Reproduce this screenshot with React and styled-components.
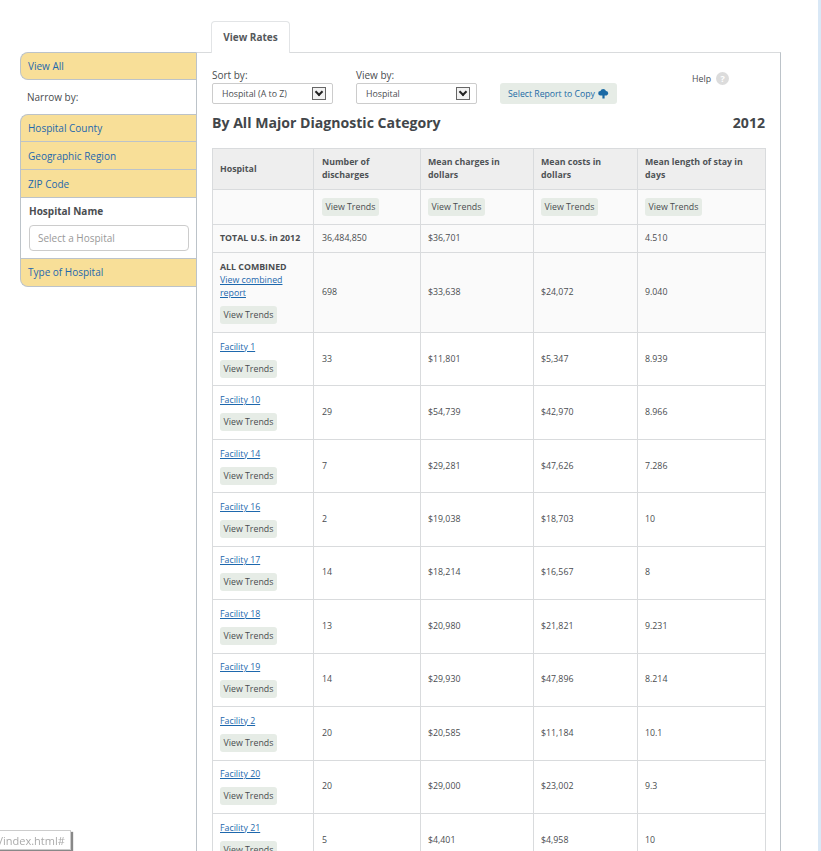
import React from 'react'
import styled, { createGlobalStyle } from 'styled-components'

const GlobalStyle = createGlobalStyle`
  html, body {
    margin: 0;
    height: 851px;
    overflow: hidden;
    background: #fff;
  }
  body {
    font-family: "Open Sans", "Liberation Sans", sans-serif;
    color: #4a4d50;
  }
`

const facilities = [
  ['Facility 1', '33', '$11,801', '$5,347', '8.939'],
  ['Facility 10', '29', '$54,739', '$42,970', '8.966'],
  ['Facility 14', '7', '$29,281', '$47,626', '7.286'],
  ['Facility 16', '2', '$19,038', '$18,703', '10'],
  ['Facility 17', '14', '$18,214', '$16,567', '8'],
  ['Facility 18', '13', '$20,980', '$21,821', '9.231'],
  ['Facility 19', '14', '$29,930', '$47,896', '8.214'],
  ['Facility 2', '20', '$20,585', '$11,184', '10.1'],
  ['Facility 20', '20', '$29,000', '$23,002', '9.3'],
  ['Facility 21', '5', '$4,401', '$4,958', '10'],
]

const headers = ['Number of discharges', 'Mean charges in dollars', 'Mean costs in dollars', 'Mean length of stay in days']

const CloudIcon = () => (
  <svg width="11" height="10" viewBox="0 0 11 10">
    <path fill="#1b6aa5" d="M2.4 6.4A2.2 2.2 0 0 1 2.4 2 3 3 0 0 1 8 1.9 2.3 2.3 0 0 1 8.6 6.4H6.6V9.6H4.4V6.4z" />
  </svg>
)

const App = () => {
  return (
    <Page>
      <GlobalStyle />
      <Sidebar>
        <AccordionItem $single>View All</AccordionItem>
        <NarrowLabel>Narrow by:</NarrowLabel>
        <AccordionItem $top>Hospital County</AccordionItem>
        <AccordionItem>Geographic Region</AccordionItem>
        <AccordionItem>ZIP Code</AccordionItem>
        <HospitalFilter>
          <FilterTitle>Hospital Name</FilterTitle>
          <FilterInput placeholder="Select a Hospital" />
        </HospitalFilter>
        <AccordionItem $bottom>Type of Hospital</AccordionItem>
      </Sidebar>
      <Main>
        <Tab>View Rates</Tab>
        <Panel>
          <Controls>
            <Control $width="121px">
              <ControlLabel>Sort by:</ControlLabel>
              <SelectBox>
                Hospital (A to Z)
                <SelectArrow />
              </SelectBox>
            </Control>
            <Control $width="121px">
              <ControlLabel>View by:</ControlLabel>
              <SelectBox>
                Hospital
                <SelectArrow />
              </SelectBox>
            </Control>
            <CopyButton>
              Select Report to Copy <CloudIcon />
            </CopyButton>
            <Help>
              Help <HelpDot>?</HelpDot>
            </Help>
          </Controls>
          <TitleRow>
            <Title>By All Major Diagnostic Category</Title>
            <Title>2012</Title>
          </TitleRow>
          <Table>
            <colgroup>
              <Col $width="101px" />
              <Col $width="107px" />
              <Col $width="113px" />
              <Col $width="104px" />
              <Col $width="128px" />
            </colgroup>
            <thead>
              <tr>
                <HeadCell>Hospital</HeadCell>
                {headers.map(h => (
                  <HeadCell key={h}>{h}</HeadCell>
                ))}
              </tr>
            </thead>
            <tbody>
              <Row $height="35px" $tint>
                <Cell />
                {headers.map(h => (
                  <Cell key={h}>
                    <TrendButton>View Trends</TrendButton>
                  </Cell>
                ))}
              </Row>
              <Row $height="28px" $tint>
                <Cell><strong>TOTAL U.S. in 2012</strong></Cell>
                <Cell>36,484,850</Cell>
                <Cell>$36,701</Cell>
                <Cell />
                <Cell>4.510</Cell>
              </Row>
              <Row $height="80px" $tint>
                <Cell>
                  <strong>ALL COMBINED</strong>
                  <br />
                  <CellLink href="#">View combined report</CellLink>
                  <StackedTrend>View Trends</StackedTrend>
                </Cell>
                <Cell>698</Cell>
                <Cell>$33,638</Cell>
                <Cell>$24,072</Cell>
                <Cell>9.040</Cell>
              </Row>
              {facilities.map(f => (
                <Row key={f[0]} $height="53.44px">
                  <Cell>
                    <CellLink href="#">{f[0]}</CellLink>
                    <StackedTrend>View Trends</StackedTrend>
                  </Cell>
                  <Cell>{f[1]}</Cell>
                  <Cell>{f[2]}</Cell>
                  <Cell>{f[3]}</Cell>
                  <Cell>{f[4]}</Cell>
                </Row>
              ))}
            </tbody>
          </Table>
        </Panel>
      </Main>
      <StatusTip>/index.html#</StatusTip>
    </Page>
  )
}

export default App

const Page = styled.div`
  display: flex;
  align-items: flex-start;
  box-sizing: border-box;
  width: 821px;
  height: 851px;
  padding: 21px 0 0 20px;
  border-right: 3px solid #d9e8f6;
  overflow: hidden;
`

const Sidebar = styled.div`
  width: 176px;
  flex: none;
  margin-top: 31px;
  font-size: 10px;
`

const AccordionItem = styled.div`
  box-sizing: border-box;
  height: ${p => (p.$bottom ? '29px' : '28px')};
  display: flex;
  align-items: center;
  padding-left: 7px;
  padding-bottom: ${p => (p.$bottom ? '2px' : '0')};
  background: #f8df98;
  color: #1e68ad;
  border: 1px solid #bcc3c9;
  border-top-width: ${p => (p.$single || p.$top || p.$bottom ? '1px' : '0')};
  border-right: 0;
  border-radius: ${p => (p.$single ? '8px 0 0 8px' : p.$top ? '8px 0 0 0' : p.$bottom ? '0 0 0 8px' : '0')};
`

const NarrowLabel = styled.div`
  height: 34px;
  display: flex;
  align-items: center;
  padding-left: 7px;
  font-size: 10px;
  color: #4a4d50;
`

const HospitalFilter = styled.div`
  box-sizing: border-box;
  height: 60px;
  padding: 6px 8px 0 8px;
  border-left: 1px solid #bcc3c9;
`

const FilterTitle = styled.div`
  font-weight: 700;
  font-size: 10px;
  line-height: 15px;
  margin-bottom: 6px;
`

const FilterInput = styled.input`
  box-sizing: border-box;
  display: block;
  width: 160px;
  height: 26px;
  padding: 0 8px;
  border: 1px solid #ccc;
  border-radius: 4px;
  font-family: inherit;
  font-size: 10px;
  &::placeholder {
    color: #999;
  }
`

const Main = styled.div`
  width: 585px;
  flex: none;
`

const Tab = styled.div`
  box-sizing: border-box;
  width: 79px;
  height: 32px;
  margin: 0 0 -1px 15px;
  padding-bottom: 2px;
  position: relative;
  display: flex;
  align-items: center;
  justify-content: center;
  background: #fff;
  border: 1px solid #e2e4e6;
  border-bottom: 0;
  border-radius: 4px 4px 0 0;
  font-size: 10px;
  font-weight: 700;
  color: #55585b;
`

const Panel = styled.div`
  box-sizing: border-box;
  height: 900px;
  padding: 15px 15px 0 15px;
  border-top: 1px solid #d9dbdd;
  border-left: 1px solid #bcc3c9;
  border-right: 1px solid #bcc3c9;
`

const Controls = styled.div`
  display: flex;
  align-items: flex-end;
  position: relative;
  gap: 23px;
`

const Control = styled.div`
  width: ${p => p.$width};
`

const ControlLabel = styled.div`
  font-size: 10px;
  line-height: 14px;
  margin-bottom: 1px;
`

const SelectBox = styled.div`
  box-sizing: border-box;
  display: flex;
  align-items: center;
  justify-content: space-between;
  height: 21px;
  padding: 0 6px 0 9px;
  border: 1px solid #ccc;
  border-radius: 2px;
  font-size: 8.8px;
`

const SelectArrow = styled.span`
  box-sizing: border-box;
  width: 14px;
  height: 13px;
  border: 1px solid #666;
  background: #f2f2f2;
  position: relative;
  &::after {
    content: '';
    position: absolute;
    left: 3px;
    top: 1px;
    width: 4px;
    height: 4px;
    border-right: 2px solid #222;
    border-bottom: 2px solid #222;
    transform: rotate(45deg);
  }
`

const CopyButton = styled.div`
  box-sizing: border-box;
  height: 21px;
  width: 117px;
  display: flex;
  align-items: center;
  justify-content: center;
  gap: 3px;
  white-space: nowrap;
  background: #e6ece6;
  border-radius: 3px;
  color: #1b6aa5;
  font-size: 8.7px;
`

const Help = styled.div`
  position: absolute;
  top: 4px;
  left: 480px;
  display: flex;
  align-items: center;
  gap: 5px;
  font-size: 8.8px;
`

const HelpDot = styled.span`
  width: 13px;
  height: 13px;
  border-radius: 50%;
  background: #dcdcdc;
  color: #fff;
  font-size: 9px;
  font-weight: 700;
  display: flex;
  align-items: center;
  justify-content: center;
`

const TitleRow = styled.div`
  display: flex;
  justify-content: space-between;
  align-items: center;
  height: 20px;
  margin: 8px 0 16px;
`

const Title = styled.div`
  font-size: 14.1px;
  font-weight: 700;
  color: #42464a;
`

const Table = styled.table`
  width: 553px;
  table-layout: fixed;
  border-collapse: collapse;
  font-size: 8.8px;
`

const Col = styled.col`
  width: ${p => p.$width};
`

const HeadCell = styled.th`
  height: 40px;
  padding: 0 7px;
  background: #eee;
  border: 1px solid #d9dbdd;
  text-align: left;
  line-height: 13px;
  font-weight: 700;
  color: #4f5356;
  &:nth-child(2) {
    padding-left: 8px;
  }
`

const Row = styled.tr`
  height: ${p => p.$height};
  background: ${p => (p.$tint ? '#fafafa' : '#fff')};
`

const Cell = styled.td`
  padding: 0 7px;
  border: 1px solid #d9dbdd;
  line-height: 13px;
  color: #4a4d50;
  &:nth-child(2) {
    padding-left: 8px;
  }
`

const CellLink = styled.a`
  color: #1e68ad;
  text-decoration: underline;
`

const TrendButton = styled.span`
  display: inline-block;
  height: 18px;
  line-height: 18px;
  padding: 0 3.5px;
  background: #e6ece6;
  border-radius: 3px;
  white-space: nowrap;
`

const StackedTrend = styled(TrendButton)`
  display: block;
  width: fit-content;
  margin-top: 6px;
`

const StatusTip = styled.div`
  position: fixed;
  left: -2px;
  bottom: 1px;
  box-sizing: border-box;
  height: 20px;
  padding: 0 5px 0 0;
  display: flex;
  align-items: center;
  background: #fff;
  border: 1px solid #ccc;
  box-shadow: 2px 2px 1px #888;
  font-size: 11px;
  color: #aaa;
`
